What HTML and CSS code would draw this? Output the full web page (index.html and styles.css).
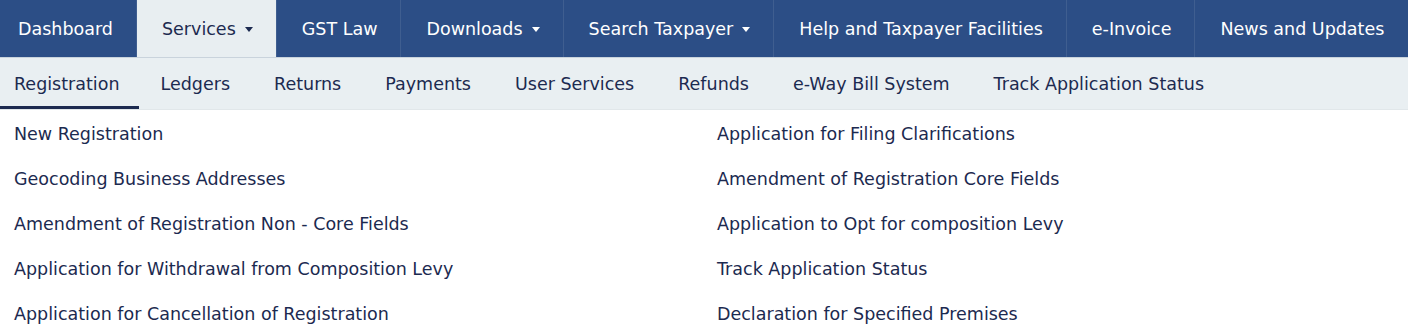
FILE: index.html
```html
<!DOCTYPE html>
<html>
<head>
<meta charset="utf-8">
<link rel="stylesheet" href="styles.css">
</head>
<body>
<nav class="topnav">
  <a class="top-item first">Dashboard</a>
  <a class="top-item active">Services<span class="caret"></span></a>
  <a class="top-item">GST Law</a>
  <a class="top-item">Downloads<span class="caret"></span></a>
  <a class="top-item">Search Taxpayer<span class="caret"></span></a>
  <a class="top-item">Help and Taxpayer Facilities</a>
  <a class="top-item">e-Invoice</a>
  <a class="top-item last">News and Updates</a>
</nav>
<nav class="subnav">
  <a class="sub-item active">Registration</a>
  <a class="sub-item">Ledgers</a>
  <a class="sub-item">Returns</a>
  <a class="sub-item">Payments</a>
  <a class="sub-item">User Services</a>
  <a class="sub-item">Refunds</a>
  <a class="sub-item">e-Way Bill System</a>
  <a class="sub-item">Track Application Status</a>
</nav>
<div class="menu">
  <a class="menu-item">New Registration</a>
  <a class="menu-item">Application for Filing Clarifications</a>
  <a class="menu-item">Geocoding Business Addresses</a>
  <a class="menu-item">Amendment of Registration Core Fields</a>
  <a class="menu-item">Amendment of Registration Non - Core Fields</a>
  <a class="menu-item">Application to Opt for composition Levy</a>
  <a class="menu-item">Application for Withdrawal from Composition Levy</a>
  <a class="menu-item">Track Application Status</a>
  <a class="menu-item">Application for Cancellation of Registration</a>
  <a class="menu-item">Declaration for Specified Premises</a>
</div>
</body>
</html>
```
FILE: styles.css
```css
* { box-sizing: border-box; }
html, body {
  margin: 0;
  padding: 0;
  background: #ffffff;
  font-family: "DejaVu Sans", Verdana, sans-serif;
  font-size: 17.5px;
  overflow: hidden;
}
a { text-decoration: none; }

.topnav {
  display: flex;
  height: 58px;
  background: #2c4e86;
  border-bottom: 1px solid #c9d3dc;
}
.top-item {
  display: flex;
  align-items: center;
  height: 57px;
  padding: 0 23px 0 25px;
  color: #ffffff;
  border-right: 1px solid #3f5e90;
  white-space: pre;
}
.top-item.first { padding-left: 18px; padding-right: 23px; }
.top-item.last { border-right: none; flex: 1; }
.top-item.active {
  background: #e8eef1;
  color: #1c2a50;
}
.caret {
  display: inline-block;
  width: 0;
  height: 0;
  margin-left: 9px;
  border-left: 4.5px solid transparent;
  border-right: 4.5px solid transparent;
  border-top: 5px solid currentColor;
  position: relative;
  top: 1px;
}

.subnav {
  display: flex;
  height: 52px;
  background: #e9eff2;
  border-bottom: 1px solid #e1e7ea;
}
.sub-item {
  display: flex;
  align-items: center;
  padding: 0 22px;
  color: #1c2a50;
  border-bottom: 3px solid transparent;
  padding-top: 3px;
}
.sub-item.active {
  padding-left: 14px;
  padding-right: 19px;
  border-bottom-color: #1c2a50;
}

.menu {
  display: grid;
  grid-template-columns: 1fr 1fr;
  padding-top: 2px;
}
.menu-item {
  display: block;
  height: 45px;
  line-height: 45px;
  padding-left: 14px;
  color: #1c2a50;
}
.menu-item:nth-child(2n) { padding-left: 13px; }
```
